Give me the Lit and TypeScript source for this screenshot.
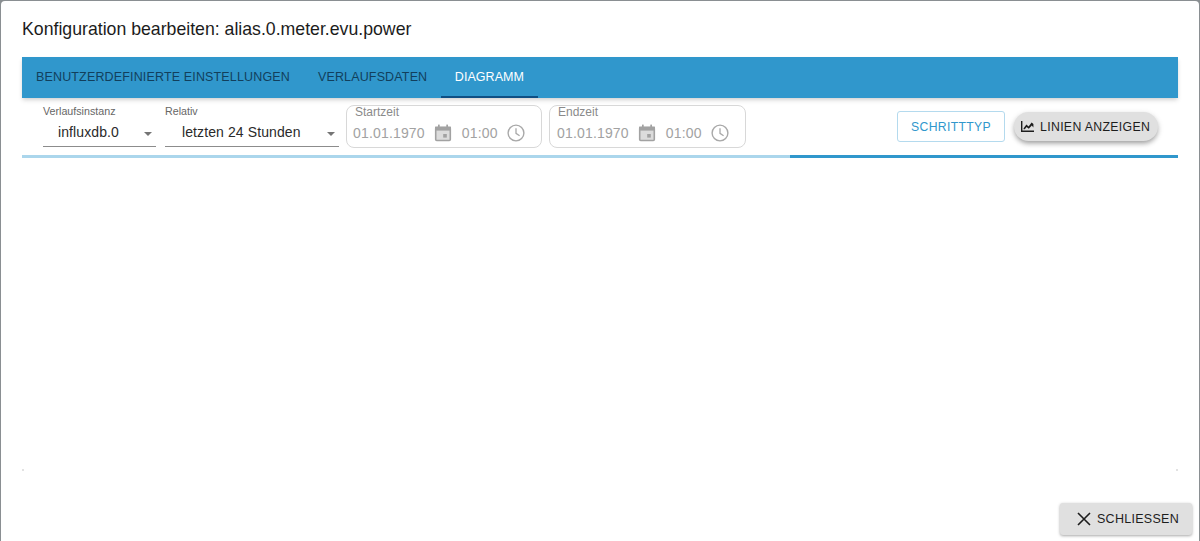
import { LitElement, html, css, svg } from "lit";
import { customElement } from "lit/decorators.js";

const calIcon = svg`<rect x="1.7" y="3.5" width="14.6" height="13" rx="1" fill="#dcdcdc" stroke="#a2a2a2" stroke-width="1.6"/><rect x="1" y="2.6" width="16" height="4" fill="#a2a2a2"/><rect x="4" y="0.6" width="1.7" height="3" fill="#a2a2a2"/><rect x="12.3" y="0.6" width="1.7" height="3" fill="#a2a2a2"/><rect x="9.2" y="10" width="3.6" height="3.6" fill="#a2a2a2"/>`;
const clockIcon = svg`<circle cx="9" cy="9" r="7.9" fill="none" stroke="#a8a8a8" stroke-width="1.4"/><path d="M9 4.2v5.2l3.6 2.4" fill="none" stroke="#a8a8a8" stroke-width="1.3"/>`;

@customElement("app-root")
export class AppRoot extends LitElement {
  static styles = css`
    :host { display: block; width: 1200px; height: 541px; background: #8a8f92; font-family: "Liberation Sans", Arial, sans-serif; overflow: hidden; }
    .paper { width: 1198px; height: 540px; margin: 1px 0 0 1px; background: #fff; border-radius: 4px 4px 0 0; display: flex; flex-direction: column; box-sizing: border-box; }
    .title { height: 56px; flex: none; box-sizing: border-box; padding: 18px 0 0 21px; font-size: 17.7px; line-height: 20px; color: #1c1c1c; }
    .body { margin: 0 21px; height: 414px; flex: none; position: relative; display: flex; flex-direction: column; }
    .mark { position: absolute; bottom: 0; width: 2px; height: 2px; background: #e2e2e2; }
    .mark.l { left: 0; }
    .mark.r { right: 0; }
    .tabs { height: 41px; flex: none; background: #3097cc; display: flex; box-shadow: 0 2px 4px -1px rgba(0,0,0,.15), 0 3px 5px rgba(0,0,0,.07); position: relative; }
    .tab { height: 40px; padding: 0 14px; display: flex; align-items: center; font-size: 12.5px; letter-spacing: .15px; color: #123f5c; white-space: nowrap; }
    .tab.active { color: #fff; border-bottom: 2px solid #0e4f84; padding-top: 1px; box-sizing: content-box; height: 38px; margin-left: -0.5px; letter-spacing: .05px; }
    .tools { height: 57px; flex: none; display: flex; align-items: flex-start; box-sizing: border-box; padding: 7px 0 0 21px; }
    .select { display: flex; flex-direction: column; border-bottom: 1px solid #8c8c8c; height: 42px; box-sizing: border-box; flex: none; }
    .s1 { width: 113px; margin-right: 9px; }
    .s2 { width: 174px; margin-right: 7px; }
    .lab { font-size: 10.7px; line-height: 13px; color: #666; }
    .val { display: flex; align-items: center; justify-content: space-between; font-size: 14px; color: #2a2a2a; padding: 5px 4px 0 15px; letter-spacing: .1px; line-height: 18px; }
    .s2 .val { padding-left: 17px; }
    .arrow { width: 0; height: 0; border-left: 4.5px solid transparent; border-right: 4.5px solid transparent; border-top: 4.5px solid #757575; margin-top: 3px; }
    .date { width: 196px; height: 43px; box-sizing: border-box; border: 1px solid #d8d8d8; border-radius: 8px; padding: 0 0 0 6px; margin-right: 7px; flex: none; color: #a2a2a2; display: flex; flex-direction: column; }
    .date + .date { width: 197px; margin-right: 6px; padding-left: 7px; }
    .dlab { font-size: 12px; line-height: 13px; padding-left: 2px; color: #8a8a8a; }
    .date + .date .dlab { padding-left: 1px; }
    .row { display: flex; align-items: center; font-size: 14px; letter-spacing: .17px; height: 20px; margin-top: 4px; }
    .row svg { flex: none; }
    .cal { width: 18px; height: 18px; margin: 0 10px 0 9px; }
    .clk { width: 18px; height: 18px; margin-left: 9px; }
    .spacer { flex: 1; }
    .btn-out { width: 108px; height: 31px; box-sizing: border-box; margin-top: 6px; border: 1px solid #b4daee; border-radius: 3px; color: #3097cc; display: flex; align-items: center; justify-content: center; font-size: 12.2px; letter-spacing: .33px; flex: none; }
    .btn-pill { margin: 7px 20px 0 9px; width: 144px; height: 29px; border-radius: 15px; background: #e0e0e0; box-shadow: 0 3px 5px -1px rgba(0,0,0,.3), 0 2px 6px rgba(0,0,0,.15); display: flex; align-items: center; box-sizing: border-box; padding-left: 7px; font-size: 12.3px; letter-spacing: .33px; color: #1d1d1d; flex: none; white-space: nowrap; }
    .btn-pill svg { width: 13px; height: 11px; margin-right: 6px; fill: #1d1d1d; flex: none; }
    .progress { height: 3px; flex: none; background: linear-gradient(to right, #abd6ec 0 768px, #3097cc 768px); }
    .chart { flex: 1; }
    .foot { flex: 1; display: flex; justify-content: flex-end; align-items: flex-start; padding: 32px 7px 0 0; }
    .close { width: 132px; height: 32px; box-sizing: border-box; background: #e0e0e0; border-radius: 3px; box-shadow: 0 1px 3px rgba(0,0,0,.35); display: flex; align-items: center; padding-left: 14px; font-size: 12.5px; letter-spacing: .28px; color: #1d1d1d; white-space: nowrap; }
    .close svg { width: 20px; height: 20px; margin-right: 3px; stroke: #1d1d1d; stroke-width: 1.6; fill: none; flex: none; }
  `;

  private dateField(label: string) {
    return html`<div class="date">
      <div class="dlab">${label}</div>
      <div class="row">
        <span>01.01.1970</span>
        <svg class="cal" viewBox="0 0 18 18">${calIcon}</svg>
        <span>01:00</span>
        <svg class="clk" viewBox="0 0 18 18">${clockIcon}</svg>
      </div>
    </div>`;
  }

  render() {
    return html`<div class="paper">
      <div class="title">Konfiguration bearbeiten: alias.0.meter.evu.power</div>
      <div class="body">
        <div class="tabs">
          <div class="tab">BENUTZERDEFINIERTE EINSTELLUNGEN</div>
          <div class="tab">VERLAUFSDATEN</div>
          <div class="tab active">DIAGRAMM</div>
        </div>
        <div class="tools">
          <div class="select s1">
            <div class="lab">Verlaufsinstanz</div>
            <div class="val"><span>influxdb.0</span><i class="arrow"></i></div>
          </div>
          <div class="select s2">
            <div class="lab">Relativ</div>
            <div class="val"><span>letzten 24 Stunden</span><i class="arrow"></i></div>
          </div>
          ${this.dateField("Startzeit")}
          ${this.dateField("Endzeit")}
          <div class="spacer"></div>
          <div class="btn-out">SCHRITTTYP</div>
          <div class="btn-pill">
            <svg viewBox="0 0 13 11"><path d="M0 0h1.4v9.4H13V11H0z M2.6 7.2L5.4 3.6 7.6 5.4 10.6 1.6 12.4 3v3.4l-1.6-2-3 3.4-2.2-1.8-1.8 2.2H2.6z"/></svg>
            LINIEN ANZEIGEN
          </div>
        </div>
        <div class="progress"></div>
        <div class="chart"></div>
        <i class="mark l"></i><i class="mark r"></i>
      </div>
      <div class="foot">
        <div class="close">
          <svg viewBox="0 0 20 20"><path d="M4 4l12 12M16 4L4 16"/></svg>
          SCHLIESSEN
        </div>
      </div>
    </div>`;
  }
}
